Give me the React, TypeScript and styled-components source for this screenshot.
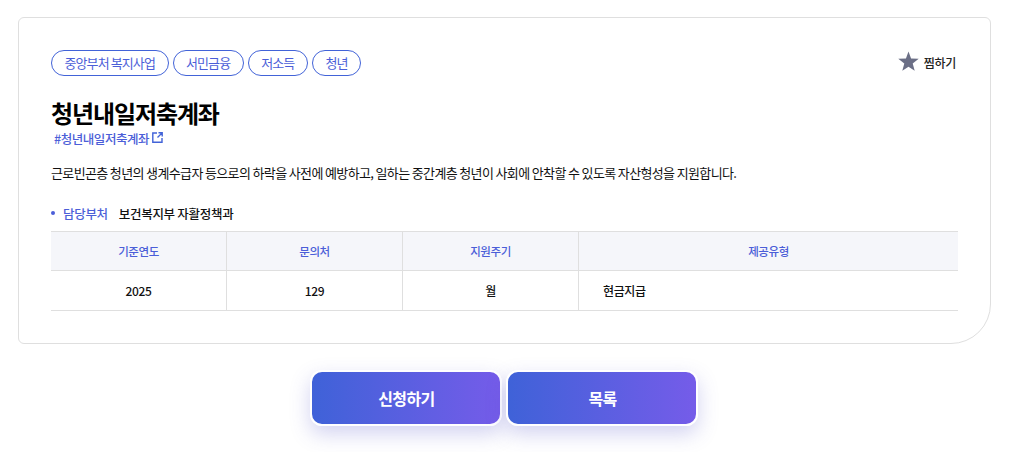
import React from "react";
import styled, { createGlobalStyle } from "styled-components";

const GlobalStyle = createGlobalStyle`
  html, body {
    margin: 0;
    padding: 0;
    background: #fff;
    font-family: "Noto Sans CJK KR", "Noto Sans", sans-serif;
    color: #111;
  }
`;

const Page = styled.div`
  width: 1020px;
  height: 452px;
  padding: 17px 29px 0 18px;
  box-sizing: border-box;
  overflow: hidden;
`;

const Card = styled.section`
  box-sizing: border-box;
  height: 327px;
  padding: 32px 32px 0 32px;
  border: 1px solid #dfdfdf;
  border-radius: 6px 6px 40px 6px;
`;

const TopRow = styled.div`
  display: flex;
  justify-content: space-between;
  align-items: center;
`;

const Tags = styled.ul`
  display: flex;
  gap: 4px;
  margin: 0;
  padding: 0;
  list-style: none;
`;

const Tag = styled.li`
  box-sizing: border-box;
  height: 26px;
  padding: 0 12.5px;
  border: 1px solid #4263d8;
  border-radius: 13px;
  font-size: 13px;
  line-height: 24px;
  letter-spacing: -0.9px;
  color: #4b5ed8;
`;

const Bookmark = styled.button`
  display: flex;
  align-items: center;
  gap: 5px;
  margin: -2px 2px 0 0;
  padding: 0;
  border: 0;
  background: none;
  font: inherit;
  font-size: 12px;
  font-weight: 500;
  letter-spacing: -0.3px;
  color: #222;
`;

const Star = styled.svg`
  width: 21px;
  height: 21px;
  margin-bottom: 2px;
`;

const Title = styled.h2`
  margin: 20px 0 0;
  font-size: 24px;
  line-height: 34px;
  font-weight: 700;
  letter-spacing: -1.1px;
  color: #000;
`;

const Hash = styled.a`
  display: flex;
  align-items: center;
  gap: 3px;
  margin: 0 0 0 3px;
  font-size: 12.5px;
  font-weight: 500;
  line-height: 18px;
  letter-spacing: -0.45px;
  color: #4b5ed8;
`;

const OpenIcon = styled.svg`
  width: 11px;
  height: 11px;
  margin-bottom: 3px;
`;

const Summary = styled.p`
  margin: 15px 0 0;
  font-size: 13px;
  line-height: 20px;
  letter-spacing: -0.64px;
  color: #111;
`;

const Dept = styled.div`
  display: flex;
  align-items: center;
  margin: 20px 0 0;
  height: 20px;
  font-size: 12.5px;
  letter-spacing: -0.3px;
`;

const Dot = styled.span`
  width: 4px;
  height: 4px;
  margin-right: 8px;
  border-radius: 50%;
  background: #4b5ed8;
`;

const DeptLabel = styled.span`
  margin-right: 11px;
  font-weight: 500;
  color: #4b5ed8;
`;

const DeptValue = styled.span`
  font-weight: 500;
  color: #111;
`;

const Table = styled.div`
  display: grid;
  grid-template-columns: 176px 176px 176px 379px;
  margin-top: 8px;
  border-top: 1px solid #dfdfdf;
`;

const Cell = styled.div<{ $head?: boolean; $left?: boolean; $last?: boolean }>`
  box-sizing: border-box;
  height: ${(p) => (p.$head ? "39px" : "40px")};
  display: flex;
  align-items: center;
  justify-content: ${(p) => (p.$left ? "flex-start" : "center")};
  padding-left: ${(p) => (p.$left ? "24px" : "0")};
  border-bottom: 1px solid #dfdfdf;
  border-right: ${(p) => (p.$last ? "0" : "1px solid #dfdfdf")};
  background: ${(p) => (p.$head ? "#f5f6fa" : "#fff")};
  color: ${(p) => (p.$head ? "#4b5ed8" : "#111")};
  font-size: ${(p) => (p.$head ? "11.5px" : "12px")};
  font-weight: 500;
  letter-spacing: -0.4px;
`;

const Actions = styled.div`
  display: flex;
  justify-content: center;
  gap: 4px;
  margin: 26px 0 0 -2px;
`;

const ActionButton = styled.button`
  box-sizing: border-box;
  width: 192px;
  height: 56px;
  padding: 0 0 0 2px;
  border: 2px solid #fff;
  border-radius: 12px;
  background: linear-gradient(90deg, #3f62d8 0%, #755ce9 100%);
  box-shadow: 0 8px 20px rgba(80, 80, 200, 0.25);
  color: #fff;
  font: inherit;
  font-size: 16px;
  font-weight: 700;
  letter-spacing: -0.6px;
`;

const tags = ["중앙부처 복지사업", "서민금융", "저소득", "청년"];

export default function App() {
  return (
    <Page>
      <GlobalStyle />
      <Card>
        <TopRow>
          <Tags>
            {tags.map((t) => (
              <Tag key={t}>{t}</Tag>
            ))}
          </Tags>
          <Bookmark>
            <Star viewBox="0 0 22 22" aria-hidden="true">
              <path
                d="M11 .5l2.7 7.3 8 .4-6.3 4.9 2.1 7.7L11 16.4l-6.5 4.4 2.1-7.7L.3 8.2l8-.4z"
                fill="#6b6f86"
              />
            </Star>
            찜하기
          </Bookmark>
        </TopRow>
        <Title>청년내일저축계좌</Title>
        <Hash>
          #청년내일저축계좌
          <OpenIcon viewBox="0 0 11 11" fill="none" stroke="#4263d8" strokeWidth="1.4" aria-hidden="true">
            <path d="M5 1H.8v9.2H10V6" />
            <path d="M6.5.8h3.7v3.7M10 1 5.5 5.5" />
          </OpenIcon>
        </Hash>
        <Summary>
          근로빈곤층 청년의 생계수급자 등으로의 하락을 사전에 예방하고, 일하는 중간계층 청년이 사회에 안착할 수 있도록 자산형성을 지원합니다.
        </Summary>
        <Dept>
          <Dot />
          <DeptLabel>담당부처</DeptLabel>
          <DeptValue>보건복지부 자활정책과</DeptValue>
        </Dept>
        <Table>
          <Cell $head>기준연도</Cell>
          <Cell $head>문의처</Cell>
          <Cell $head>지원주기</Cell>
          <Cell $head $last>제공유형</Cell>
          <Cell>2025</Cell>
          <Cell>129</Cell>
          <Cell>월</Cell>
          <Cell $left $last>현금지급</Cell>
        </Table>
      </Card>
      <Actions>
        <ActionButton>신청하기</ActionButton>
        <ActionButton>목록</ActionButton>
      </Actions>
    </Page>
  );
}
